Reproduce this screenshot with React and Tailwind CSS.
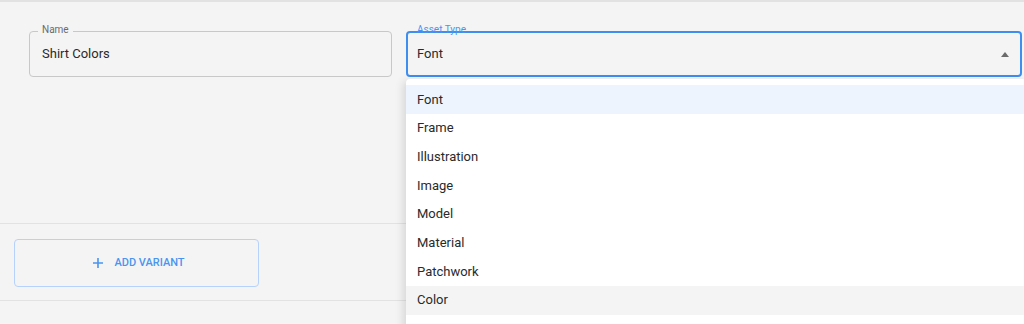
import React from 'react';

const options = ['Font', 'Frame', 'Illustration', 'Image', 'Model', 'Material', 'Patchwork', 'Color'];

const App = () => {
  return (
    <div className="relative h-[324px] w-[1024px] overflow-hidden bg-[#f4f4f4] font-['Roboto',sans-serif]">
      <div className="h-[2px] bg-[#e2e2e2]" />
      <div className="h-[222px] border-b border-[#e2e2e2] pt-[29px]">
        <div className="flex gap-[14px] pl-[29px]">
          <div className="relative h-[46px] w-[363px] rounded-[4px] border border-[#c8c8c8] flex items-center pl-[12px]">
            <span className="absolute -top-[10px] left-[8px] bg-[#f4f4f4] px-[4px] text-[10px] text-[#6b6b6b]">Name</span>
            <span className="text-[13px] text-[#2a2a2a]">Shirt Colors</span>
          </div>
          <div className="relative h-[46px] w-[616px] rounded-[4px] border-2 border-[#3d8ef0] flex items-center pl-[9px] pr-[11px]">
            <span className="absolute -top-[11px] left-[9px] text-[10px] text-[#4a94f0]">Asset Type</span>
            <span className="flex-1 text-[13px] text-[#2a2a2a]">Font</span>
            <span className="h-0 w-0 border-x-[4px] border-b-[5px] border-x-transparent border-b-[#6b6b6b]" />
          </div>
        </div>
      </div>
      <div className="h-[77px] border-b border-[#e2e2e2] pt-[15px] pl-[14px]">
        <button className="flex h-[48px] w-[245px] items-center justify-center gap-[10px] rounded-[4px] border border-[#b6d2fa] pl-[4px] text-[#4a94f0]">
          <svg width="12" height="12" viewBox="0 0 12 12">
            <path d="M6 1v10M1 6h10" stroke="#4a94f0" strokeWidth="1.6" />
          </svg>
          <span className="text-[11px] font-medium">ADD VARIANT</span>
        </button>
      </div>
      <div className="absolute left-[406px] top-[79px] h-[260px] w-[620px] rounded-[4px] bg-white pt-[6px] shadow-[-3px_2px_8px_rgba(0,0,0,0.12)]">
        {options.map((o, i) => (
          <div
            key={o}
            className={`flex h-[28.7px] items-center pl-[11px] text-[13px] text-[#2a2a2a] ${i === 0 ? 'bg-[#eef4fd]' : ''} ${o === 'Color' ? 'bg-[#f4f4f4]' : ''}`}
          >
            {o}
          </div>
        ))}
      </div>
    </div>
  );
};

export default App;
